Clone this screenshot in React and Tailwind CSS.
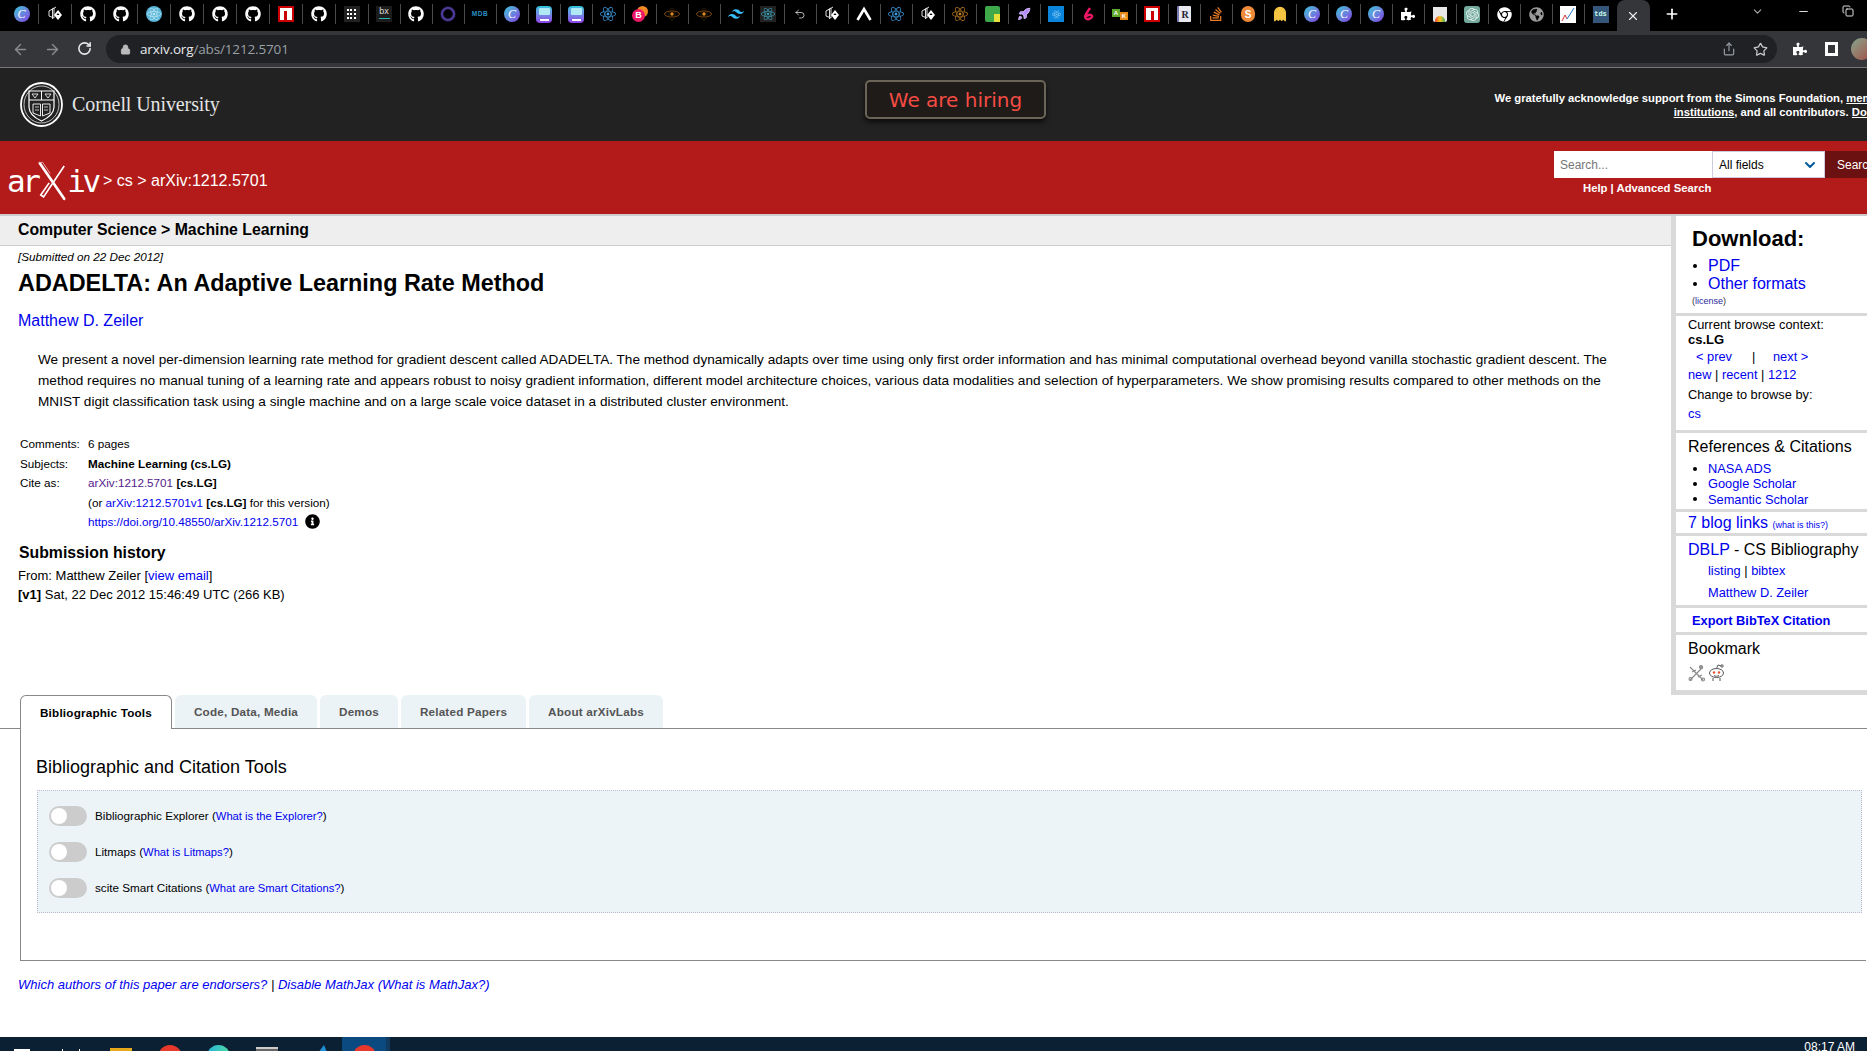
import React from 'react';
import { ArrowLeft, ArrowRight, RotateCw, Lock, Share, Star, Plus, X, ChevronDown, Minus, Copy, Undo2, Ghost, Rocket } from 'lucide-react';
import { FaGithub, FaReact, FaStackOverflow, FaChrome, FaPuzzlePiece, FaGlobeAmericas, FaInfoCircle } from 'react-icons/fa';
import { SiTailwindcss, SiOpenai } from 'react-icons/si';

const Canva = () => (
  <div className="w-4 h-4 rounded-full bg-linear-to-br from-[#19c6d6] to-[#7a35e0] flex items-center justify-center text-white italic text-[12px] leading-none font-['Liberation_Serif',serif]">C</div>
);
const Cube = () => (
  <svg width="16" height="16" viewBox="0 0 16 16" fill="none" stroke="#ddd" strokeWidth="1">
    <path d="M2 5l5-3v10l-5-2z M4 4l5-3 M5.5 3v10" />
    <path d="M7 9l4-5 4 5-4 5z" fill="#fff" stroke="none" />
    <path d="M9.5 9l1.5-2 1.500 2z" fill="#000" stroke="none" />
  </svg>
);
const Gh = () => <FaGithub size={16} color="#fff" />;
const ReactBlue = () => (
  <div className="w-4 h-4 rounded-full bg-[#58b5d8] flex items-center justify-center"><FaReact size={14} color="#bfe6f3" /></div>
);
const Npm = () => (
  <div className="w-4 h-4 bg-[#cc0000] p-[2px]">
    <div className="w-full h-full bg-white flex justify-center"><div className="w-[3px] h-[9px] mt-[3px] bg-[#cc0000]" /></div>
  </div>
);
const Grid = () => (
  <div className="w-4 h-4 bg-[#222] grid grid-cols-3 gap-px p-[3px] place-items-center">
    {[1, 2, 3, 4, 5, 6, 7, 8, 9].map((n) => <div key={n} className="w-[2px] h-[2px] bg-white" />)}
  </div>
);
const Bx = () => (
  <div className="w-4 h-4 bg-[#1c1c1c] flex flex-col items-center text-[#ddd] text-[9px] leading-[11px] font-['Liberation_Sans',sans-serif]">
    bx<div className="w-[11px] h-px bg-[#2bb5b5] mt-px" />
  </div>
);
const Ring = () => (
  <svg width="16" height="16" viewBox="0 0 16 16" fill="none"><circle cx="8" cy="8" r="6" stroke="#4d3a94" strokeWidth="2.500" /><circle cx="8" cy="8" r="7.500" stroke="#2c2260" strokeWidth="0.800" strokeDasharray="1 1" /></svg>
);
const Mdb = () => <span className="text-[#2a8fc5] text-[6.500px] font-bold tracking-[0.5px] font-['Liberation_Sans',sans-serif]">MDB</span>;
const Printer = () => (
  <div className="w-4 h-[17px] rounded-[4px] bg-linear-to-b from-[#22c3dd] to-[#8a3ee8] flex flex-col items-center justify-between py-[2px]">
    <div className="w-[11px] h-[7px] rounded-[1px] bg-[#aee9f5]" />
    <div className="w-[9px] h-[2px] bg-white" />
  </div>
);
const ReactIcon = () => <FaReact size={16} color="#3c9be0" />;
const Bee = () => (
  <div className="relative w-4 h-4">
    <div className="absolute right-0 top-0 w-[11px] h-[11px] rounded-full bg-[#f08a24]" />
    <div className="absolute left-0 bottom-0 w-[13px] h-[13px] rounded-full bg-[#ec1767] flex items-center justify-center text-white text-[9px] font-bold font-['Liberation_Sans',sans-serif]">B</div>
  </div>
);
const Eye = () => (
  <svg width="16" height="16" viewBox="0 0 16 16" fill="none" stroke="#7a4a10"><ellipse cx="8" cy="8" rx="7.500" ry="3" /><ellipse cx="8" cy="8" rx="3" ry="6" stroke="#2e1c06" /><circle cx="8" cy="8" r="1.700" fill="#e08a1c" stroke="none" /></svg>
);
const Tailwind = () => <SiTailwindcss size={16} color="#38bdf8" />;
const ReactDark = () => (
  <div className="w-4 h-4 bg-[#222] flex items-center justify-center"><FaReact size={14} color="#3a9db5" /></div>
);
const Undo = () => <Undo2 size={12} color="#eee" strokeWidth={1.500} />;
const Lambda = () => (
  <svg width="16" height="16" viewBox="0 0 16 16" fill="none" stroke="#fff" strokeWidth="2.600"><path d="M1.500 14L8 3l6.500 11" /></svg>
);
const AtomOrange = () => <FaReact size={16} color="#b87a20" />;
const GreenDoc = () => (
  <div className="w-[15px] h-4 rounded-[2px] bg-[#3fa94a] flex flex-col items-end justify-end">
    <div className="w-[6px] h-[8px] bg-[#e6e03a]" />
  </div>
);
const RocketIcon = () => <Rocket size={14} color="#d9c6ff" fill="#b48cf5" strokeWidth={1.500} />;
const BlueSquare = () => (
  <div className="w-4 h-4 bg-[#0b84db] flex items-center justify-center"><FaReact size={9} color="#8fd0f7" /></div>
);
const Pink = () => (
  <svg width="16" height="16" viewBox="0 0 16 16" fill="none" stroke="#ec1763" strokeWidth="2.400"><path d="M10 2L6 8c-2 3 0 6 3 5s4-3 2-4-4 1-7 2" /></svg>
);
const Ak = () => (
  <div className="flex items-end text-white text-[6px] font-bold leading-none font-['Liberation_Sans',sans-serif]">
    <div className="w-2 h-2 bg-[#5faa2d] flex items-center justify-center mb-[3px]">A</div>
    <div className="w-2 h-2 bg-[#e88a1a] flex items-center justify-center">K</div>
  </div>
);
const RDoc = () => (
  <div className="w-[14px] h-4 bg-[#e8e8f0] border-l-2 border-[#7a7ab0] rounded-[1px] flex items-center justify-center text-[#223] text-[10px] font-bold font-['Liberation_Serif',serif]">R</div>
);
const Stack = () => <FaStackOverflow size={16} color="#e87b24" />;
const SCircle = () => (
  <div className="w-[14px] h-4 rounded-full bg-[#ef8a3a] flex items-center justify-center text-white text-[10px] font-bold font-['Liberation_Sans',sans-serif]">S</div>
);
const GhostIcon = () => <Ghost size={16} color="#f5c542" fill="#f5c542" />;
const Puzzle = () => <FaPuzzlePiece size={14} color="#fff" />;
const Bag = () => (
  <div className="w-[14px] h-[15px] bg-[#e8e8e8] rounded-b-[2px] flex items-end justify-center">
    <div className="w-[10px] h-[6px] rounded-t-full bg-linear-to-r from-[#e53b30] via-[#f6c21c] to-[#2fa84f]" />
  </div>
);
const Gpt = () => (
  <div className="w-4 h-[17px] rounded-[3px] bg-[#74aa9c] flex items-center justify-center"><SiOpenai size={13} color="#e8f4f0" /></div>
);
const Chrome = () => <FaChrome size={15} color="#fff" />;
const Globe = () => <FaGlobeAmericas size={15} color="#9a9a9a" />;
const Chart = () => (
  <svg width="16" height="17" viewBox="0 0 16 17"><rect width="16" height="17" fill="#fff" /><path d="M2 15l3-6 2 4" stroke="#d33" fill="none" /><path d="M7 13l7-11" stroke="#27c" fill="none" /></svg>
);
const Tds = () => (
  <div className="w-4 h-[17px] bg-[#34567a] flex items-center justify-center text-[#cfe] text-[7px] font-bold font-['Liberation_Mono',monospace]">tds</div>
);

const favicons = [
  Canva, Cube, Gh, Gh, ReactBlue, Gh, Gh, Gh, Npm, Gh, Grid, Bx, Gh, Ring, Mdb, Canva, Printer, Printer, ReactIcon, Bee,
  Eye, Eye, Tailwind, ReactDark, Undo, Cube, Lambda, ReactIcon, Cube, AtomOrange, GreenDoc, RocketIcon, BlueSquare, Pink, Ak, Npm, RDoc, Stack, SCircle, GhostIcon,
  Canva, Canva, Canva, Puzzle, Bag, Gpt, Chrome, Globe, Chart, Tds,
];

const TabStrip = () => (
  <div className="h-[31px] bg-black flex pl-[5.5px] shrink-0">
    {favicons.map((Icon, i) => (
      <div key={i} className={`${i < 11 ? 'w-[33px]' : 'w-[32px]'} h-[20px] mt-[4px] flex items-center justify-center ${i < 49 ? 'border-r border-[#4a4a4a]' : ''}`}>
        <Icon />
      </div>
    ))}
    <div className="w-[33px] h-[31px] bg-[#35363a] rounded-t-lg flex items-center justify-center">
      <X size={14} color="#e8eaed" />
    </div>
    <div className="w-[44px] h-[28px] flex items-center justify-center">
      <Plus size={16} color="#fff" strokeWidth={2.500} />
    </div>
    <ChevronDown size={13} color="#aaa" className="ml-[57px] mt-[5px]" />
    <Minus size={13} color="#ddd" className="ml-[33px] mt-[5px]" />
    <Copy size={12} color="#ddd" className="ml-[32px] mt-[5px]" />
  </div>
);

const Toolbar = () => (
  <div className="h-[37px] bg-[#35363a] border-b border-[#777] flex items-start shrink-0 pt-[4px]">
    <ArrowLeft size={17} color="#8a8b8e" className="ml-[12px] mt-[6px] shrink-0" />
    <ArrowRight size={17} color="#8a8b8e" className="ml-[15px] mt-[6px] shrink-0" />
    <RotateCw size={15} color="#e8eaed" strokeWidth={2.500} className="ml-[16px] mt-[6px] shrink-0" />
    <div className="ml-[14px] w-[1671px] h-[28px] shrink-0 bg-[#202124] rounded-full flex items-center pl-[14px] pr-[9px] text-[13.500px] font-['Open_Sans',sans-serif]">
      <Lock size={11} color="#bbb" fill="#bbb" />
      <span className="ml-[9px] text-[#e8eaed] tracking-[-0.15px]">arxiv.org<span className="text-[#9aa0a6]">/abs/1212.5701</span></span>
      <Share size={14} color="#9aa0a6" className="ml-auto" />
      <Star size={15} color="#c8c8c8" className="ml-[17px]" />
    </div>
    <FaPuzzlePiece size={14} color="#fff" className="ml-[16px] mt-[7px] shrink-0" />
    <div className="ml-[18px] mt-[7px] w-[13px] h-[14px] shrink-0 border-[3px] border-white bg-[#35363a]" />
    <div className="ml-[13px] mt-[3px] w-[22px] h-[22px] shrink-0 rounded-full bg-linear-to-br from-[#7fa58c] to-[#a04a4a]" />
  </div>
);

const CornellSeal = () => (
  <svg width="43" height="45" viewBox="0 0 43 45" fill="none" stroke="#fff">
    <ellipse cx="21.500" cy="22.500" rx="20.500" ry="21.500" strokeWidth="1.800" />
    <ellipse cx="21.500" cy="22.500" rx="17.500" ry="18.500" strokeWidth="0.700" />
    <path d="M9 9h25v16c0 7-6 11-12.500 14C15 36 9 32 9 25z" strokeWidth="1.200" />
    <path d="M9 18h25M21.500 9v9" strokeWidth="1" />
    <path d="M12 12h6l-3 4zM25 12h6l-3 4z" strokeWidth="0.800" />
    <path d="M13 22h7.500v12l-7.500-3zM30 22h-7.500v12l7.500-3z" strokeWidth="0.900" />
    <path d="M15 25h4M15 28h4M24 25h4M24 28h4" strokeWidth="0.700" />
  </svg>
);

const ArxivX = () => (
  <svg width="30" height="40" viewBox="0 0 32 40" fill="none" className="shrink-0">
    <path d="M3 1l26 38" stroke="#fff" strokeWidth="2.800" strokeLinecap="round" />
    <path d="M2 0.500l4-0.500 8 12" stroke="#e8b0b0" strokeWidth="1" />
    <path d="M29 4L7 37l-3-2 9-13" stroke="#fff" strokeWidth="1.800" fill="none" />
  </svg>
);

const CornellBar = () => (
  <div className="h-[73px] bg-[#222] flex items-start shrink-0 overflow-hidden">
    <div className="ml-[20px] mt-[14px] shrink-0"><CornellSeal /></div>
    <div className="ml-[9px] mt-[23px] w-[160px] shrink-0 whitespace-nowrap text-[#e4e4e4] text-[20px] leading-[26px] tracking-[-0.1px] font-['Liberation_Serif',serif]">Cornell University</div>
    <div className="ml-[633px] mt-[12px] w-[181px] h-[39px] shrink-0 bg-[#1e1b18] border-2 border-[#6b6558] rounded-[5px] shadow-[0_3px_5px_rgba(0,0,0,0.7)] flex items-center justify-center text-[#f44c44] text-[20px] font-['DejaVu_Sans',sans-serif]">We are hiring</div>
    <div className="ml-[404px] mt-[23px] w-[440px] shrink-0 text-right text-white text-[11.25px] leading-[14px] font-bold font-['Liberation_Sans',sans-serif]">
      We gratefully acknowledge support from the Simons Foundation, <u>member</u><br />
      <u>institutions</u>, and all contributors. <u>Donate</u>
    </div>
  </div>
);

const ArxivBar = () => (
  <div className="h-[73px] bg-[#b31b1b] flex items-start shrink-0 overflow-hidden text-white font-['Liberation_Sans',sans-serif]">
    <div className="w-[1554px] shrink-0 flex items-start">
      <div className="ml-[7px] w-[96px] shrink-0 mt-[20px] flex items-center h-[40px] text-[31px] font-['DejaVu_Sans_Mono',monospace] tracking-[-3.5px]">
        <span>ar</span>
        <ArxivX />
        <span>iv</span>
      </div>
      <div className="mt-[30px] text-[16px] leading-[20px] whitespace-nowrap">&gt; cs &gt; arXiv:1212.5701</div>
    </div>
    <div className="mt-[10px] shrink-0 w-[400px]">
      <div className="flex h-[27px] text-[12px]">
        <div className="w-[158px] bg-white text-[#777] flex items-center pl-[6px]">Search...</div>
        <div className="w-[113px] bg-white border border-[#ccd] text-black flex items-center pl-[6px] pr-[6px] justify-between">All fields<ChevronDown size={16} color="#005a9c" strokeWidth={3} /></div>
        <div className="w-[100px] bg-[#6b1111] flex items-center pl-[12px]">Search</div>
      </div>
      <div className="pl-[29px] mt-[3px] text-[11.3px] leading-[14px] font-bold">Help | Advanced Search</div>
    </div>
  </div>
);

const A = ({ children, className = '' }) => <a className={`text-[#0000ee] ${className}`}>{children}</a>;

const MainColumn = () => (
  <div className="w-[1671px] shrink-0">
    <div className="h-[30px] bg-[#eee] border-b border-[#ccc] pl-[18px] text-[15.8px] leading-[27px] font-bold">Computer Science &gt; Machine Learning</div>
    <div className="pl-[18px]">
      <div className="mt-[4px] text-[11.7px] leading-[14px] italic">[Submitted on 22 Dec 2012]</div>
      <h1 className="mt-[4px] text-[23.4px] leading-[30px] font-bold">ADADELTA: An Adaptive Learning Rate Method</h1>
      <div className="mt-[13px] text-[16px] leading-[20px]"><A>Matthew D. Zeiler</A></div>
      <p className="mt-[18px] ml-[20px] text-[13.6px] leading-[21px] whitespace-nowrap">
        We present a novel per-dimension learning rate method for gradient descent called ADADELTA. The method dynamically adapts over time using only first order information and has minimal computational overhead beyond vanilla stochastic gradient descent. The<br />
        method requires no manual tuning of a learning rate and appears robust to noisy gradient information, different model architecture choices, various data modalities and selection of hyperparameters. We show promising results compared to other methods on the<br />
        MNIST digit classification task using a single machine and on a large scale voice dataset in a distributed cluster environment.
      </p>
      <div className="mt-[22px] ml-[2px] grid grid-cols-[68px_1fr] text-[11.7px] leading-[19.500px]">
        <div>Comments:</div><div>6 pages</div>
        <div>Subjects:</div><div className="font-bold">Machine Learning (cs.LG)</div>
        <div>Cite as:</div><div><a className="text-[#551a8b]">arXiv:1212.5701</a> <b>[cs.LG]</b></div>
        <div />
        <div>(or <A>arXiv:1212.5701v1</A> <b>[cs.LG]</b> for this version)</div>
        <div />
        <div className="flex items-center"><A>https://doi.org/10.48550/arXiv.1212.5701</A><FaInfoCircle size={15} className="ml-[7px]" /></div>
      </div>
      <h2 className="mt-[11px] ml-px text-[15.8px] leading-[20px] font-bold">Submission history</h2>
      <div className="mt-[3px] text-[13px] leading-[19px]">
        From: Matthew Zeiler [<A>view email</A>]<br />
        <b>[v1]</b> Sat, 22 Dec 2012 15:46:49 UTC (266 KB)
      </div>
    </div>
  </div>
);

const Bullet = ({ children }) => (
  <div className="relative pl-[20px]">
    <span className="absolute left-[5px] top-1/2 -mt-[2px] w-[4px] h-[4px] rounded-full bg-black" />
    {children}
  </div>
);

const Reddit = () => (
  <svg width="19" height="18" viewBox="0 0 19 18" fill="none" stroke="#555" strokeWidth="1">
    <ellipse cx="9.500" cy="9" rx="7" ry="4.500" fill="#fff" />
    <circle cx="7" cy="8.500" r="1.200" fill="#e8502a" stroke="none" />
    <circle cx="12" cy="8.500" r="1.200" fill="#e8502a" stroke="none" />
    <path d="M9.500 4.500L11 1l3 .8M6 14v3M13 14v3M7 11.500c1.500 1 3.500 1 5 0" />
    <circle cx="15" cy="2" r="1.200" fill="#fff" />
  </svg>
);

const ScienceWise = () => (
  <svg width="17" height="18" viewBox="0 0 17 18" fill="none" stroke="#888" strokeWidth="1.100">
    <path d="M2 3l13 13M15 3L2 16M4 8l4-2M10 13l4-2" />
    <circle cx="2.500" cy="15" r="1.500" /><circle cx="15" cy="15.500" r="1.500" /><circle cx="13" cy="3" r="1.500" fill="#999" />
  </svg>
);

const Sidebar = () => (
  <div className="w-[196px] h-[479px] shrink-0 border-l-[5px] border-b-[5px] border-[#d9d9d9] text-[12.8px] whitespace-nowrap">
    <div className="h-[97px] pt-[11px] pl-[16px]">
      <div className="text-[22px] leading-[24px] font-bold">Download:</div>
      <div className="mt-[6px] -ml-[4px] text-[16px] leading-[18px]">
        <Bullet><A>PDF</A></Bullet>
        <Bullet><A>Other formats</A></Bullet>
      </div>
      <div className="mt-[2px] text-[9px] leading-[12px] text-[#333]">(<A className="text-[#2a2a9a]">license</A>)</div>
    </div>
    <div className="h-[117px] border-t-[3px] border-[#d9d9d9] pl-[12px]">
      <div className="pt-px leading-[16px]">Current browse context:</div>
      <div className="text-[13px] leading-[14px] font-bold">cs.LG</div>
      <div className="mt-px leading-[18px] pl-[8px] flex">
        <A className="w-[56px]">&lt; prev</A>
        <span className="w-[21px]">|</span>
        <A>next &gt;</A>
      </div>
      <div className="leading-[18px]"><A>new</A> | <A>recent</A> | <A>1212</A></div>
      <div className="mt-[3px] leading-[16px]">Change to browse by:</div>
      <div className="mt-[3px] leading-[16px]"><A>cs</A></div>
    </div>
    <div className="h-[79px] border-t-[3px] border-[#d9d9d9] pl-[12px] pt-[4px]">
      <div className="text-[16px] leading-[20px]">References &amp; Citations</div>
      <div className="mt-[4px] leading-[15.3px]">
        <Bullet><A>NASA ADS</A></Bullet>
        <Bullet><A>Google Scholar</A></Bullet>
        <Bullet><A>Semantic Scholar</A></Bullet>
      </div>
    </div>
    <div className="h-[24px] border-t-[3px] border-[#d9d9d9] pl-[12px] text-[16px] leading-[21px]">
      <A>7 blog links</A> <A className="text-[9px]">(what is this?)</A>
    </div>
    <div className="h-[72px] border-t-[3px] border-[#d9d9d9] pl-[12px] pt-[4px]">
      <div className="text-[16px] leading-[20px]"><A>DBLP</A> - CS Bibliography</div>
      <div className="mt-[2px] pl-[20px] leading-[18px]"><A>listing</A> | <A>bibtex</A></div>
      <div className="mt-[4px] pl-[20px] leading-[18px]"><A>Matthew D. Zeiler</A></div>
    </div>
    <div className="h-[27px] border-t-[3px] border-[#d9d9d9] pl-[16px] leading-[25px] font-bold"><A>Export BibTeX Citation</A></div>
    <div className="h-[58px] border-t-[3px] border-[#d9d9d9] pl-[12px] pt-[4px]">
      <div className="text-[16px] leading-[20px]">Bookmark</div>
      <div className="mt-[5px] flex gap-[2px]"><ScienceWise /><Reddit /></div>
    </div>
  </div>
);

const tabs = [
  { label: 'Code, Data, Media', width: 'w-[142px]' },
  { label: 'Demos', width: 'w-[78px]' },
  { label: 'Related Papers', width: 'w-[125px]' },
  { label: 'About arXivLabs', width: 'w-[134px]' },
];

const tools = [
  { label: 'Bibliographic Explorer', link: 'What is the Explorer?' },
  { label: 'Litmaps', link: 'What is Litmaps?' },
  { label: 'scite Smart Citations', link: 'What are Smart Citations?' },
];

const LabsTabs = () => (
  <div className="text-[11.7px]">
    <div className="h-[34px] pl-[20px] flex gap-[3px] border-b border-[#888]">
      <div className="w-[152px] h-[34px] bg-white border border-b-0 border-[#888] rounded-t-md flex items-center justify-center font-bold tracking-[0.2px]">Bibliographic Tools</div>
      {tabs.map((tab) => (
        <div key={tab.label} className={`${tab.width} h-[33px] bg-[#ecf3f7] rounded-t-md flex items-center justify-center font-bold tracking-[0.2px] text-[#555]`}>{tab.label}</div>
      ))}
    </div>
    <div className="ml-[20px] w-[1846px] h-[232px] border-l border-b border-[#888] pt-[26px]">
      <h3 className="ml-[15px] text-[18px] leading-[24px]">Bibliographic and Citation Tools</h3>
      <div className="ml-[16px] mt-[11px] w-[1825px] h-[123px] bg-[#edf4f8] border border-dotted border-[#bbc] pt-[15px] pl-[11px] flex flex-col gap-[16px]">
        {tools.map((tool) => (
          <div key={tool.label} className="flex items-center h-[20px]">
            <div className="w-[38px] h-[20px] rounded-full bg-[#ccc] p-[2px]"><div className="w-[16px] h-[16px] rounded-full bg-white" /></div>
            <span className="ml-[8px]">{tool.label} (<A className="text-[11.2px]">{tool.link}</A>)</span>
          </div>
        ))}
      </div>
    </div>
  </div>
);

const Taskbar = () => (
  <div className="h-[14px] bg-[#0c2033] flex items-start overflow-hidden shrink-0">
    <div className="ml-[14px] mt-[12px] w-[16px] h-[6px] bg-white" />
    <div className="ml-[32px] mt-[12px] w-[18px] h-[2px] border-l border-r border-white" />
    <div className="ml-[30px] mt-[11px] w-[22px] h-[10px] bg-[#e8a81c]" />
    <div className="ml-[26px] mt-[8px] w-[24px] h-[24px] rounded-full bg-[#e8382c]" />
    <div className="ml-[25px] mt-[8px] w-[23px] h-[23px] rounded-full bg-linear-to-r from-[#27b4d8] to-[#4fd8a0]" />
    <div className="ml-[26px] mt-[10px] w-[22px] h-[10px] bg-[#666] border-t-2 border-[#ccc]" />
    <svg width="14" height="14" viewBox="0 0 14 14" className="ml-[37px] mt-[8px]"><path d="M9 0L0 12h14z" fill="#1e90d8" /></svg>
    <div className="ml-[13px] w-[44px] h-[14px] bg-[#0a4a80] flex justify-center pt-[8px]">
      <div className="w-[23px] h-[23px] rounded-full bg-[#e8382c] shrink-0" />
    </div>
    <div className="w-[4px] h-[14px] bg-[#123a5e]" />
    <div className="ml-auto mr-[12px] mt-[2px] text-white text-[12px] leading-[16px]">08:17 AM</div>
  </div>
);

export default function App() {
  return (
    <div className="w-[1867px] h-[1051px] overflow-hidden flex flex-col bg-white text-black font-['Liberation_Sans',sans-serif]">
      <TabStrip />
      <Toolbar />
      <CornellBar />
      <ArxivBar />
      <div className="h-[2px] bg-[#ccc] shrink-0" />
      <div className="flex shrink-0">
        <MainColumn />
        <Sidebar />
      </div>
      <LabsTabs />
      <div className="mt-[15px] ml-[18px] text-[13px] leading-[18px] italic">
        <A>Which authors of this paper are endorsers?</A> | <A>Disable MathJax</A> <A>(What is MathJax?)</A>
      </div>
      <div className="flex-1" />
      <Taskbar />
    </div>
  );
}
